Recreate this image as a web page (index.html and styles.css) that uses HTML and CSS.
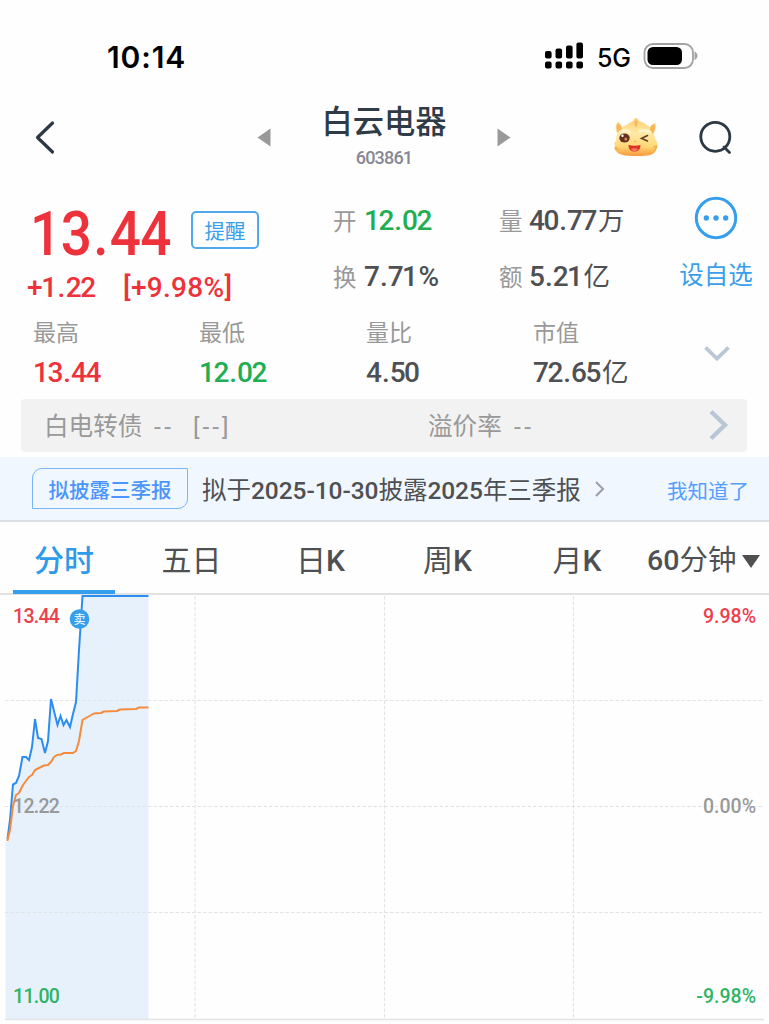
FILE: index.html
```html
<!DOCTYPE html>
<html lang="zh-CN">
<head>
<meta charset="utf-8">
<title>白云电器 603861</title>
<link rel="stylesheet" href="styles.css">
</head>
<body>
<div class="screen">
  <div class="status">
    <span class="clock">10:14</span>
    <svg class="signal" width="40" height="28" viewBox="0 0 40 28"><rect x="1" y="9" width="6.600" height="7.500" rx="2"/><rect x="11.500" y="6.500" width="6.600" height="10" rx="2"/><rect x="22" y="3.500" width="6.600" height="13" rx="2"/><rect x="32.400" y="0.500" width="6.600" height="16" rx="2"/><rect x="1" y="19.500" width="6.600" height="7" rx="2"/><rect x="11.500" y="19.500" width="6.600" height="7" rx="2"/><rect x="22" y="19.500" width="6.600" height="7" rx="2"/><rect x="32.400" y="19.500" width="6.600" height="7" rx="2"/></svg>
    <span class="net">5G</span>
    <svg class="battery" width="56" height="28" viewBox="0 0 56 28"><rect x="1.500" y="2" width="48.500" height="24" rx="8.500" fill="none" stroke="#a2a2a2" stroke-width="1.800"/><rect x="4.500" y="5" width="34.500" height="18" rx="5.500"/><path d="M51.500 9.500c4 1.500 4 7 0 8.500z" fill="#a2a2a2"/></svg>
  </div>

  <div class="nav">
    <svg class="back" width="22" height="36" viewBox="0 0 22 36"><path d="M18.500 3 3.500 17.500l15 14.500" fill="none" stroke="#2c3844" stroke-width="3.200" stroke-linecap="round" stroke-linejoin="round"/></svg>
    <svg class="prev" width="14" height="20" viewBox="0 0 14 20"><path d="M13.500 0.500v18L0.500 9.500z" fill="#999"/></svg>
    <div class="title"><div class="name">白云电器</div><div class="code">603861</div></div>
    <svg class="next" width="14" height="20" viewBox="0 0 14 20"><path d="M0.500 0.500v18l13-9z" fill="#999"/></svg>
    <svg class="mascot" width="48" height="42" viewBox="0 0 48 42">
      <defs><linearGradient id="fur" x1="0" y1="0" x2="0" y2="1"><stop offset="0" stop-color="#fbcf72"/><stop offset=".4" stop-color="#ffe9a5"/><stop offset=".75" stop-color="#ffd877"/><stop offset="1" stop-color="#f7973a"/></linearGradient></defs>
      <path d="M6 5c2 1 3 3 4 5l6-3c1-1 3-2 5-3 1-2 2-3 3-3s2 1 3 3l5 2 6 4c2-1 2-3 5-4 2 2 1 6-1 10l1 6c2 2 3 4 2 6 1 2 0 4-1 5-1 5-8 6-19 6C14 39 6 38 4 34c-2-1-2-3-1-5-1-2-1-4 1-5l1-8C3 12 3 8 6 5z" fill="url(#fur)"/>
      <path d="M6 6c2 1 4 4 4 7l-4 3C4 12 4 9 6 6zM42 7c-3 1-4 3-4 6l3 4c2-4 3-7 1-10z" fill="#f8b65b"/>
      <path d="M24 2l2 4-2 5-2-5z" fill="#f7b95d"/>
      <path d="M8 15c3-2 8-2 10 0M28 14c4-1 8 0 10 1" fill="none" stroke="#fff4c9" stroke-width="3" stroke-linecap="round"/>
      <ellipse cx="12.500" cy="21" rx="5.200" ry="4.500" fill="#643020"/><circle cx="10.500" cy="18.800" r="1.200" fill="#fff"/><circle cx="13.800" cy="22" r="1.500" fill="#d28b65"/>
      <path d="M35.500 18.500l-6 3 6 2.500" fill="none" stroke="#64402b" stroke-width="1.600" stroke-linecap="round"/>
      <path d="M16.500 28c4 1 8 1 12 0 0 4-2 6.500-6 6.500s-6-2.500-6-6.500z" fill="#db3429"/><path d="M19 32c2-1 5-1 7 0-1 1.500-2 2-3.500 2S20 33.500 19 32z" fill="#fb7865"/>
      <path d="M5 30l-2 1 4 2m34-3 4-1-3 5M22 25l2-1" fill="none" stroke="#f3a243"/>
    </svg>
    <svg class="search" width="36" height="36" viewBox="0 0 36 36" fill="none" stroke="#2c3844" stroke-width="2.800"><circle cx="17.300" cy="16.800" r="14.500"/><path d="M26 27 31.500 32.500" stroke-linecap="round"/></svg>
  </div>

  <div class="quote">
    <div class="main">
      <div class="price-row"><div class="price-box"><span class="price">13<u>.</u>44</span></div><span class="remind">提醒</span></div>
      <div class="change"><span class="diff">+1<u>.</u>22</span><span class="percent">[+9<u>.</u>98%]</span></div>
    </div>
    <div class="pairs">
      <div class="pair"><i>开</i><b class="green">12<u>.</u>02</b></div>
      <div class="pair"><i>换</i><b>7<u>.</u>71<span class="unit">%</span></b></div>
    </div>
    <div class="pairs">
      <div class="pair"><i>量</i><b>40<u>.</u>77<em>万</em></b></div>
      <div class="pair"><i>额</i><b>5<u>.</u>21<em>亿</em></b></div>
    </div>
    <div class="watch">
      <svg width="44" height="44" viewBox="0 0 44 44"><circle cx="22" cy="22" r="19.700" fill="none" stroke="#359fee" stroke-width="3"/><g fill="#359fee"><circle cx="12.300" cy="22" r="2.700"/><circle cx="22" cy="22" r="2.700"/><circle cx="31.700" cy="22" r="2.700"/></g></svg>
      <span>设自选</span>
    </div>
  </div>

  <div class="stats">
    <div class="stat"><i>最高</i><b class="red">13<u>.</u>44</b></div>
    <div class="stat"><i>最低</i><b class="green">12<u>.</u>02</b></div>
    <div class="stat"><i>量比</i><b>4<u>.</u>50</b></div>
    <div class="stat"><i>市值</i><b>72<u>.</u>65<em>亿</em></b></div>
    <svg class="expand" width="28" height="18" viewBox="0 0 28 18"><path d="M2.500 2.500 14 13.500 25.500 2.500" fill="none" stroke="#b9c6d5" stroke-width="3.800"/></svg>
  </div>

  <div class="bond">
    <span class="bond-name">白电转债</span><span class="dash">--</span><span class="bracket">[--]</span>
    <span class="premium">溢价率</span><span class="dash">--</span>
    <svg width="22" height="34" viewBox="0 0 22 34"><path d="M3 2.500 17 16 3 29.500" fill="none" stroke="#b9c6d5" stroke-width="4.400"/></svg>
  </div>

  <div class="notice">
    <span class="tag">拟披露三季报</span>
    <span class="message">拟于<b>2025-10-30</b>披露<b>2025</b>年三季报</span>
    <svg width="12" height="18" viewBox="0 0 12 18"><path d="M2 2l7 7-7 7" fill="none" stroke="#9b9fa7" stroke-width="2"/></svg>
    <span class="dismiss">我知道了</span>
  </div>

  <div class="tabs">
    <div class="tab active"><span>分时</span></div>
    <div class="tab"><span>五日</span></div>
    <div class="tab"><span>日<b>K</b></span></div>
    <div class="tab"><span>周<b>K</b></span></div>
    <div class="tab"><span>月<b>K</b></span></div>
    <div class="tab period"><span><b>60</b>分钟</span><svg width="20" height="16" viewBox="0 0 20 16"><path d="M1 2h18l-9 13z" fill="#505050"/></svg></div>
  </div>

  <svg class="chart" width="769" height="430" viewBox="0 594 769 430">
    <path class="area" d="M5.500 842H8L14 784 17 783 20 774 23 757 26 757 29 760 32 745 35 719 38 738 41 739 45 754 48 740 51 699 54 711 57.500 725 60.500 716 63.500 725 66.500 720 70 727 76 702 82.500 596H148.500V1019H5.500Z"/>
    <g class="grid"><path d="M5 700.500H764M5 806.500H764M5 912.500H764M195 596V1019M384.500 596V1019M573.500 596V1019"/></g>
    <path d="M5 1019.500H764" stroke="#e2e4e6" stroke-width="1.500"/>
    <polyline class="line" points="7.500,839 10,820 13,784.500 16,783 19,776 22.500,757 26,757 29,760 32,747 35,719 38,738 41.500,739 45,753 48,741 51,699 54,711 57.500,725 60.500,716 63.500,725 66.500,720 70,727 73,714 76,702 79,650 82.500,596 148.500,596"/>
    <circle cx="79.500" cy="619" r="9.800" fill="#359fee"/>
    <text class="sell" x="79.500" y="623.500">卖</text>
    <text class="label up" x="13" y="623">13.44</text>
    <text class="label flat" x="13" y="812.500">12.22</text>
    <text class="label down" x="13" y="1002.500">11.00</text>
    <text class="label end up" x="756" y="623">9.98%</text>
    <text class="label end flat" x="756" y="812.500">0.00%</text>
    <text class="label end down" x="756" y="1002.500">-9.98%</text>
    <polyline class="avg" points="7.300,841 10,830 13,806 16,795 19,793 23,785 26,781 29,777 32,775 35,770 39,768 44,765.500 48,765 51,762 54,757 57,755 61,754.500 64,753 73,753 76,751 79,741 82.500,720 86,718 94,713.500 101,713 104,711.500 117,711 120,709.500 136,709 139,707.500 148.500,707.500"/>
  </svg>
</div>
</body>
</html>
```
FILE: styles.css
```css
* { box-sizing: border-box; }
body {
  margin: 0;
  background: #fefefe;
  color: #4e5053;
  font-family: Roboto, "Noto Sans CJK SC", sans-serif;
}
svg { display: block; flex: none; }
i, em { font-style: normal; font-weight: 400; letter-spacing: 0; }
b { font-weight: 500; }
u { text-decoration: none; margin: 0 1.500px; }
span, b, i { white-space: nowrap; }
.screen { width: 769px; height: 1024px; overflow: hidden; }

.status { display: flex; align-items: center; height: 90px; padding: 24px 0 0 107px; color: #000; }
.clock { width: 437px; font: 600 30px/40px Inter, sans-serif; letter-spacing: 0.900px; }
.signal { margin-top: -2px; }
.net { width: 46px; margin-left: 13px; padding-top: 2px; font: 500 25px/40px Inter, sans-serif; letter-spacing: -0.3px; }
.battery { margin-top: -3px; }

.nav { display: grid; grid-template-columns: 223px 56px 142px 56px 149px 74px 1px; align-items: center; height: 96px; padding-left: 34px; }
.title { padding-bottom: 3px; text-align: center; }
.name { font-size: 31.300px; line-height: 40px; font-weight: 500; color: #2f3b47; }
.code { margin-top: 3px; font-size: 18px; line-height: 24px; font-weight: 500; letter-spacing: -0.8px; color: #858894; }
.next, .mascot, .search { justify-self: end; }

.quote { display: grid; grid-template-columns: 332px 167px 179px 76px; height: 128px; }
.main { padding-top: 16px; color: #ee323b; }
.price-row { display: flex; align-items: center; height: 64px; padding-left: 30px; }
.price-box { width: 161px; }
.price { display: inline-block; font-size: 61px; line-height: 64px; font-weight: 500; letter-spacing: -0.600px; transform: scaleX(0.9); transform-origin: left; }
.price u { margin: 0 2px; }
.remind { width: 68px; height: 38px; margin-top: -8px; border: 2px solid #51a9ed; border-radius: 5px; font-size: 20.500px; line-height: 38px; text-align: center; color: #3a9fea; }
.change { display: flex; height: 40px; margin-top: 2px; padding-left: 27px; font-size: 28px; line-height: 40px; letter-spacing: -1.200px; font-weight: 500; }
.diff { width: 96px; }
.percent { letter-spacing: 0.3px; }
.percent u { margin: 0; }
.pairs { padding-top: 7px; }
.pair { display: flex; line-height: 56px; height: 56px; }
.pair i { width: 32px; padding-left: 1px; font-size: 23.500px; line-height: 58px; color: #999; }
.pair b, .stat b { font-size: 28px; letter-spacing: -1.500px; }
.pairs + .pairs i { width: 30px; padding-left: 0; }
.pair em, .stat em { font-size: 26.500px; margin-left: 2px; letter-spacing: 0; }
.unit { margin-left: 2px; }
.green { color: #1fae54; }
.red { color: #ee323b; }
.watch { display: flex; flex-direction: column; align-items: center; padding-top: 10px; color: #3a9fea; font-size: 24.500px; line-height: 40px; }
.watch span { margin-top: 16px; }

.stats { display: grid; grid-template-columns: 166px 167px 167px 170px 28px; height: 85px; padding-left: 33px; }
.stat { display: flex; flex-direction: column; line-height: 40px; }
.stat i { font-size: 23px; line-height: 39px; color: #999; }
.expand { margin-top: 31px; }

.bond { display: flex; align-items: center; width: 726px; height: 53px; margin-left: 21px; padding-left: 23px; border-radius: 4px; background: #f2f2f2; font-size: 24.600px; line-height: 50px; color: #999; }
.bond span { margin-top: 2px; }
.bond-name { width: 110px; }
.dash { width: 39px; letter-spacing: 3.500px; }
.bracket { width: 235px; letter-spacing: 3px; }
.premium { width: 86px; }
.bond svg { margin-left: 155px; }

.notice { display: flex; align-items: center; height: 65px; margin-top: 5px; padding-left: 32px; border-bottom: 2px solid #dcdfe6; background: #f0f7ff; }
.tag { width: 156px; height: 41px; border: 1.500px solid #7ab4fb; border-radius: 10px 0 10px 0; font-size: 20.500px; line-height: 44px; font-weight: 500; text-align: center; color: #4a94fb; }
.message { width: 392px; margin-left: 14px; font-size: 24.500px; line-height: 40px; padding-top: 4px; letter-spacing: -0.050px; }
.dismiss { margin-left: 61px; padding-top: 2px; font-size: 20.500px; color: #559ffb; }

.tabs { display: grid; grid-template-columns: 102px 153px 105px 149px 110px 137px; height: 73px; padding-left: 13px; border-bottom: 2px solid #e2e2e2; font-size: 30px; line-height: 78px; }
.tab { text-align: center; height: 72px; }
.active { border-bottom: 4px solid #359fee; color: #2f9be8; font-weight: 500; }
.period { display: flex; align-items: center; gap: 5px; padding: 5px 0 0 15px; font-size: 28.500px; }

.chart { margin-top: -1px; }
.area { fill: #e6f1fc; }
.grid { fill: none; stroke: #e1e4e7; stroke-width: 1.200; stroke-dasharray: 3.500 2; }
.line { fill: none; stroke: #2b8df0; stroke-width: 2; }
.avg { fill: none; stroke: #f58b3c; stroke-width: 2; stroke-linejoin: round; }
.sell { font-size: 12px; fill: #fff; text-anchor: middle; }
.label { font-size: 19.500px; font-weight: 500; letter-spacing: -0.7px; }
.end { text-anchor: end; letter-spacing: 0; }
.up { fill: #ee404b; }
.flat { fill: #999; }
.down { fill: #31b365; }
```
